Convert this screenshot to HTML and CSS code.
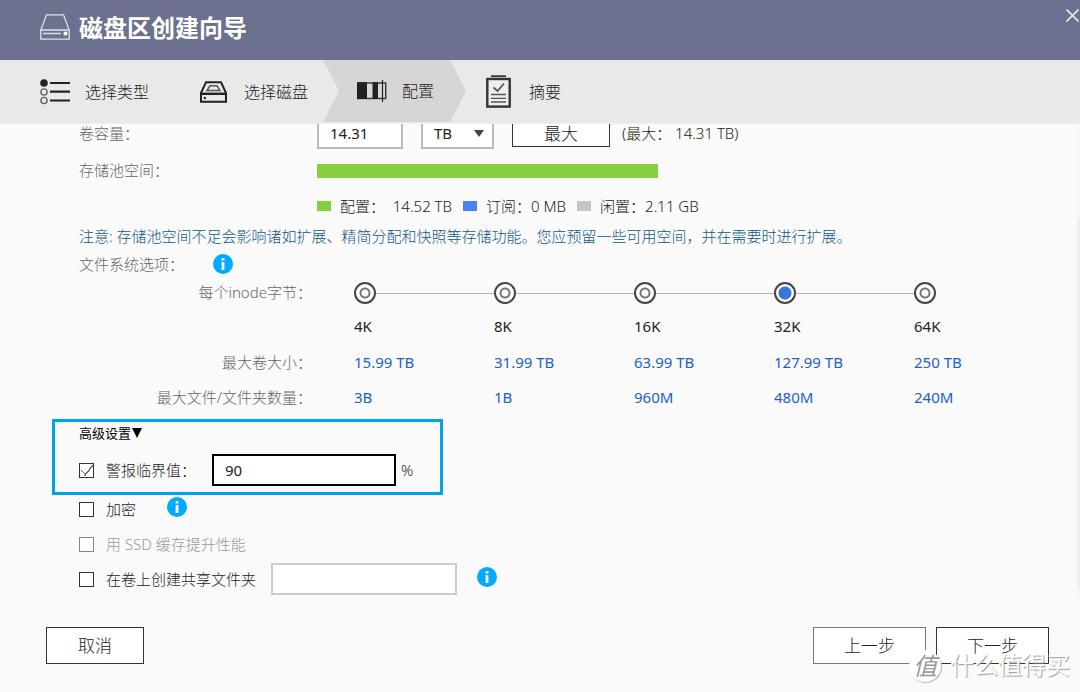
FILE: index.html
```html
<!DOCTYPE html>
<html lang="zh-CN">
<head>
<meta charset="utf-8">
<meta name="viewport" content="width=device-width, initial-scale=1">
<title>磁盘区创建向导</title>
<link rel="stylesheet" href="styles.css">
</head>
<body>
<div class="wizard">
  <header class="titlebar">
    <svg class="titlebar-icon" width="30" height="26" viewBox="0 0 30 26" fill="none" stroke="#dfe2ec" stroke-width="1.3" aria-hidden="true">
      <path d="M.8 16V25.2H29.2V16L23.5.8H6.5L.8 16Z"/><path d="M.8 16H29.2M3 19.5H21"/><rect x="24" y="18" width="3" height="3" fill="#fff" stroke="#fff" stroke-width=".6"/>
    </svg>
    <h1>磁盘区创建向导</h1>
    <button class="close" type="button" aria-label="关闭">
      <svg width="13" height="13" viewBox="0 0 13 13" stroke="#e8eaf1" stroke-width="1.6" aria-hidden="true"><path d="M.5.5 12.5 12.5M12.5.5.5 12.5"/></svg>
    </button>
  </header>

  <ol class="steps">
    <li class="step step-type">
      <svg width="30" height="26" viewBox="0 0 30 26" aria-hidden="true">
        <circle cx="4" cy="4" r="3.8" fill="#222"/><g fill="none" stroke="#666" stroke-width="1.4"><circle cx="4" cy="13" r="3.1"/><circle cx="4" cy="21.5" r="3.1"/></g>
        <path d="M10 4H30M10 12.7H30M10 21.5H30" stroke="#222" stroke-width="2.2"/>
      </svg>
      <span>选择类型</span>
    </li>
    <li class="step step-disk">
      <svg width="27" height="22" viewBox="0 0 27 22" fill="none" stroke="#222" stroke-width="2" aria-hidden="true">
        <path d="M1 12 6 1.2H21L26 12V20.8H1Z"/><path d="M1 12.8H26" stroke-width="2.4"/><path d="M7 9.5 10 4.8H17L20 9.5Z" stroke="#555" stroke-width="1.4"/><circle cx="4.8" cy="17" r="1.2" fill="#222" stroke="none"/>
      </svg>
      <span>选择磁盘</span>
    </li>
    <li class="step step-config" aria-current="step">
      <svg width="30" height="22" viewBox="0 0 30 22" aria-hidden="true">
        <rect x=".7" y="3" width="28" height="15.5" fill="#d9d9d9" stroke="#333" stroke-width="1.4"/>
        <path d="M0 2.3H10V19H0ZM15.5 2.3H21V19H15.5Z" fill="#222"/><path d="M25.5 0V22" stroke="#222" stroke-width="1.2"/>
      </svg>
      <span>配置</span>
    </li>
    <li class="step step-summary">
      <svg width="25" height="33" viewBox="0 0 25 33" fill="none" stroke="#333" aria-hidden="true">
        <path d="M5 1.2H20" stroke-width="1.8"/><rect x="1.3" y="4" width="22.4" height="27.6" stroke-width="2.4" fill="#efefef"/>
        <path d="M7.5 12.5 11.5 16 18 8.5" stroke-width="1.8" stroke="#555"/><path d="M5 19.5H20M5 23.3H20M5 27H20" stroke-width="1.3" stroke="#555"/>
      </svg>
      <span>摘要</span>
    </li>
  </ol>

  <main class="content">
    <div class="row capacity">
      <label class="label" for="capacity">卷容量：</label>
      <input class="capacity-value" id="capacity" type="text" value="14.31">
      <div class="unit">
        <select aria-label="单位"><option>TB</option><option>GB</option></select>
        <svg class="caret" width="10" height="7" viewBox="0 0 10 7" aria-hidden="true"><path d="M0 0H10L5 7Z" fill="#444"/></svg>
      </div>
      <button class="max" type="button">最大</button>
      <span class="max-note">(最大： 14.31 TB)</span>
    </div>
    <div class="row pool">
      <span class="label">存储池空间：</span>
      <div class="bar"></div>
    </div>
    <ul class="row legend">
      <li><i class="swatch used"></i>配置：&nbsp; 14.52 TB</li>
      <li><i class="swatch subscribed"></i>订阅：0 MB</li>
      <li><i class="swatch free"></i>闲置：2.11 GB</li>
    </ul>
    <p class="row notice">注意: 存储池空间不足会影响诸如扩展、精简分配和快照等存储功能。您应预留一些可用空间，并在需要时进行扩展。</p>
    <div class="row fs-options">
      <span>文件系统选项：</span>
      <button class="info" type="button" aria-label="文件系统选项说明"><svg viewBox="0 0 20 20" aria-hidden="true"><circle cx="10" cy="10" r="10" fill="#00aaff"/><path d="M8.6 4H11.4V6.4H8.6ZM8.6 8H11.4V16H8.6Z" fill="#fff"/></svg></button>
    </div>

    <table class="inode">
      <tr class="inode-choice">
        <th scope="row">每个inode字节：</th>
        <td><input type="radio" name="inode" id="i4"></td>
        <td><input type="radio" name="inode" id="i8"></td>
        <td><input type="radio" name="inode" id="i16"></td>
        <td><input type="radio" name="inode" id="i32" checked></td>
        <td><input type="radio" name="inode" id="i64"></td>
      </tr>
      <tr class="inode-size">
        <td></td>
        <td><label for="i4">4K</label></td>
        <td><label for="i8">8K</label></td>
        <td><label for="i16">16K</label></td>
        <td><label for="i32">32K</label></td>
        <td><label for="i64">64K</label></td>
      </tr>
      <tr><th scope="row">最大卷大小：</th><td>15.99 TB</td><td>31.99 TB</td><td>63.99 TB</td><td>127.99 TB</td><td>250 TB</td></tr>
      <tr><th scope="row">最大文件/文件夹数量：</th><td>3B</td><td>1B</td><td>960M</td><td>480M</td><td>240M</td></tr>
    </table>

    <section class="advanced">
      <button class="toggle" type="button" aria-expanded="true">高级设置<svg width="10" height="10" viewBox="0 0 10 10" aria-hidden="true"><path d="M0 0H10L5 10Z" fill="#000"/></svg></button>
      <div class="threshold">
        <label class="check"><input type="checkbox" checked>警报临界值：</label>
        <input class="threshold-value" type="text" value="90" aria-label="警报临界值">
        <span class="percent">%</span>
      </div>
    </section>
    <div class="row encrypt">
      <label class="check"><input type="checkbox">加密</label>
      <button class="info" type="button" aria-label="加密说明"><svg viewBox="0 0 20 20" aria-hidden="true"><circle cx="10" cy="10" r="10" fill="#00aaff"/><path d="M8.6 4H11.4V6.4H8.6ZM8.6 8H11.4V16H8.6Z" fill="#fff"/></svg></button>
    </div>
    <div class="row cache">
      <label class="check"><input type="checkbox" disabled>用 SSD 缓存提升性能</label>
    </div>
    <div class="row share">
      <label class="check"><input type="checkbox">在卷上创建共享文件夹</label>
      <input class="share-name" type="text" aria-label="共享文件夹名称">
      <button class="info" type="button" aria-label="共享文件夹说明"><svg viewBox="0 0 20 20" aria-hidden="true"><circle cx="10" cy="10" r="10" fill="#00aaff"/><path d="M8.6 4H11.4V6.4H8.6ZM8.6 8H11.4V16H8.6Z" fill="#fff"/></svg></button>
    </div>
  </main>

  <footer class="actions">
    <button class="cancel" type="button">取消</button>
    <button class="back" type="button">上一步</button>
    <button class="next" type="button">下一步</button>
  </footer>
  <div class="watermark"><span class="seal">值</span><span class="site">什么值得买</span></div>
</div>
</body>
</html>
```
FILE: styles.css
```css
* { box-sizing: border-box; }
body {
  margin: 0;
  background: #fafafa;
  color: #222;
  font: 300 15px/20px "Noto Sans", "Noto Sans CJK SC", sans-serif;
}
button, input, select { font: inherit; color: inherit; border-radius: 0; }
button { padding: 0; border: 0; background: none; cursor: pointer; }
h1, p, ol, ul { margin: 0; padding: 0; list-style: none; }
svg { display: block; flex: none; }

.wizard {
  position: relative;
  display: flex;
  flex-direction: column;
  min-height: 100vh;
}

/* Title bar */
.titlebar {
  display: flex;
  align-items: center;
  height: 60px;
  padding-left: 40px;
  background: #6b718e;
  color: #fff;
}
.titlebar-icon { margin-bottom: 6px; }
.titlebar h1 {
  margin: 0 auto 4px 9px;
  font-size: 24px;
  line-height: 32px;
  font-weight: 700;
}
.close { align-self: flex-start; margin-top: 9px; padding-right: 1px; }

/* Wizard steps */
.steps {
  display: flex;
  height: 64px;
  background: #e9e9e9;
  border-bottom: 1px solid #f0f0f0;
  position: relative;
  z-index: 1;
  font-size: 16px;
}
.step { display: flex; align-items: center; gap: 15px; white-space: nowrap; }
.step-type { padding-left: 40px; }
.step-disk { padding-left: 51px; gap: 17px; }
.step-config {
  margin: 0 20px 1px 15px;
  padding: 0 32px 0 34px;
  background: #d6d6d6;
  clip-path: polygon(0 0, calc(100% - 16px) 0, 100% 50%, calc(100% - 16px) 100%, 0 100%, 16px 50%);
}
.step-summary { gap: 18px; }

.content {
  flex: 1;
  overflow: hidden;
  padding: 0 26px 6px 79px;
  background: linear-gradient(#f6f6f6 20%, #efefef 20%, #efefef 97%, #f6f6f6 97%) right / 3px 100% no-repeat;
}
.row { display: flex; align-items: center; min-height: 28px; }
.label { width: 238px; color: #666; flex: none; }

.capacity { height: 32px; margin-top: -7px; }
.capacity-value {
  width: 86px;
  height: 32px;
  padding: 0 11px;
  border: 2px solid #bbb;
  background: #fff;
  font-weight: 400;
}
.unit {
  display: grid;
  align-items: center;
  width: 73px;
  margin: 0 18px;
}
.unit select {
  grid-area: 1 / 1;
  width: 100%;
  height: 32px;
  padding: 0 11px;
  border: 2px solid #bbb;
  background: #fff;
  appearance: none;
  font-weight: 400;
}
.caret { grid-area: 1 / 1; justify-self: end; margin-right: 10px; pointer-events: none; }
.max {
  align-self: flex-start;
  width: 98px;
  height: 30px;
  padding-top: 4px;
  border: 1px solid #333;
  background: #fff;
  font-size: 17px;
}
.max-note { margin-left: 12px; }

.pool { margin-top: 8px; }
.pool .label { padding-bottom: 2px; }
.bar { width: 341px; height: 14px; background: #84d03f; }

.legend { margin-top: 7px; padding-left: 238px; gap: 11px; }
.legend li { display: flex; align-items: center; }
.swatch { width: 14px; height: 10px; margin-right: 9px; }
.used { background: #84d03f; }
.subscribed { background: #4682f0; }
.free { background: #c6c6c6; }

.notice { margin-top: 2px; color: #0f5788; }
.fs-options { gap: 29px; color: #666; }
.info { width: 20px; height: 20px; flex: none; }

/* Bytes-per-inode table */
.inode { width: 100%; table-layout: fixed; border-collapse: collapse; }
.inode th, .inode td { height: 35px; padding: 0; text-align: left; font-weight: 300; }
.inode td { color: #1a5fd0; font-weight: 400; }
.inode th, .inode tr td:first-child { width: 275px; }
.inode th { padding-right: 42px; text-align: right; color: #666; }
.inode .inode-choice th, .inode .inode-choice td { height: 30px; }
.inode .inode-choice th { padding-bottom: 2px; }
.inode .inode-size td { height: 36px; color: #222; }
.inode-choice td {
  background: linear-gradient(#b5b5b5, #b5b5b5) 0 50% / 100% 1px no-repeat;
}
.inode-choice td:last-child { background-size: 22px 1px; }
.inode input {
  display: block;
  appearance: none;
  width: 22px;
  height: 22px;
  margin: 0;
  border: 2px solid #444;
  border-radius: 50%;
  background: radial-gradient(circle, #fff 3px, #777 4px, #777 5px, #fff 6px);
}
.inode input:checked { background: radial-gradient(circle, #3875dd 6px, #fff 7px); }

/* Check boxes */
.check { display: flex; align-items: center; gap: 12px; white-space: nowrap; }
.check input {
  appearance: none;
  width: 15px;
  height: 15px;
  margin: 0;
  border: 1px solid #333;
  background: #fff;
}
.check input:checked {
  background:
    linear-gradient(45deg, transparent 46%, #666 46%, #666 58%, transparent 58%) 1px 6px / 5px 6px no-repeat,
    linear-gradient(128deg, transparent 46%, #666 46%, #666 56%, transparent 56%) 4px 1px / 9px 11px no-repeat,
    #fff;
}
.check input:disabled { border-color: #888; }

/* Advanced settings */
.advanced {
  width: 391px;
  margin: 5px 0 0 -27px;
  padding: 0 0 6px 24px;
  border: 3px solid #00a2e8;
}
.toggle { display: flex; align-items: center; gap: 1px; height: 22px; font-size: 13px; color: #000; font-weight: 400; }
.threshold { display: flex; align-items: center; margin-top: 10px; }
.threshold .check { width: 133px; }
.threshold-value {
  width: 184px;
  height: 32px;
  padding: 0 11px;
  border: 2px solid #000;
  background: #fff;
  font-weight: 400;
}
.percent { margin-left: 5px; }
.encrypt { gap: 31px; }
.encrypt .info { margin-bottom: 4px; }
.cache { margin-top: 7px; color: #999; }
.share { margin-top: 5px; }
.share-name {
  width: 186px;
  height: 32px;
  margin: 0 20px 0 15px;
  border: 2px solid #ccc;
  background: #fff;
}
.share .info { margin-bottom: 4px; }

/* Footer */
.actions { display: flex; gap: 10px; padding: 26px 31px 29px 46px; }
.actions button {
  width: 113px;
  height: 37px;
  border: 1px solid #777;
  background: #fff;
  font-size: 17px;
}
.actions .cancel { width: 98px; margin-right: auto; border-color: #333; }
.actions .next { border-color: #333; }

.watermark {
  position: absolute;
  right: 10px;
  bottom: 10px;
  display: flex;
  align-items: center;
  gap: 9px;
  color: #fff;
  font-size: 24px;
  line-height: 32px;
  font-weight: 400;
  text-shadow: 1px 1px 1px #999;
  pointer-events: none;
}
.seal {
  width: 32px;
  height: 32px;
  border-radius: 50%;
  background: #fff;
  box-shadow: 1px 1px 1px #bbb;
  color: #999;
  font-style: italic;
  text-align: center;
  text-shadow: none;
}
.site { padding-bottom: 2px; }
```
